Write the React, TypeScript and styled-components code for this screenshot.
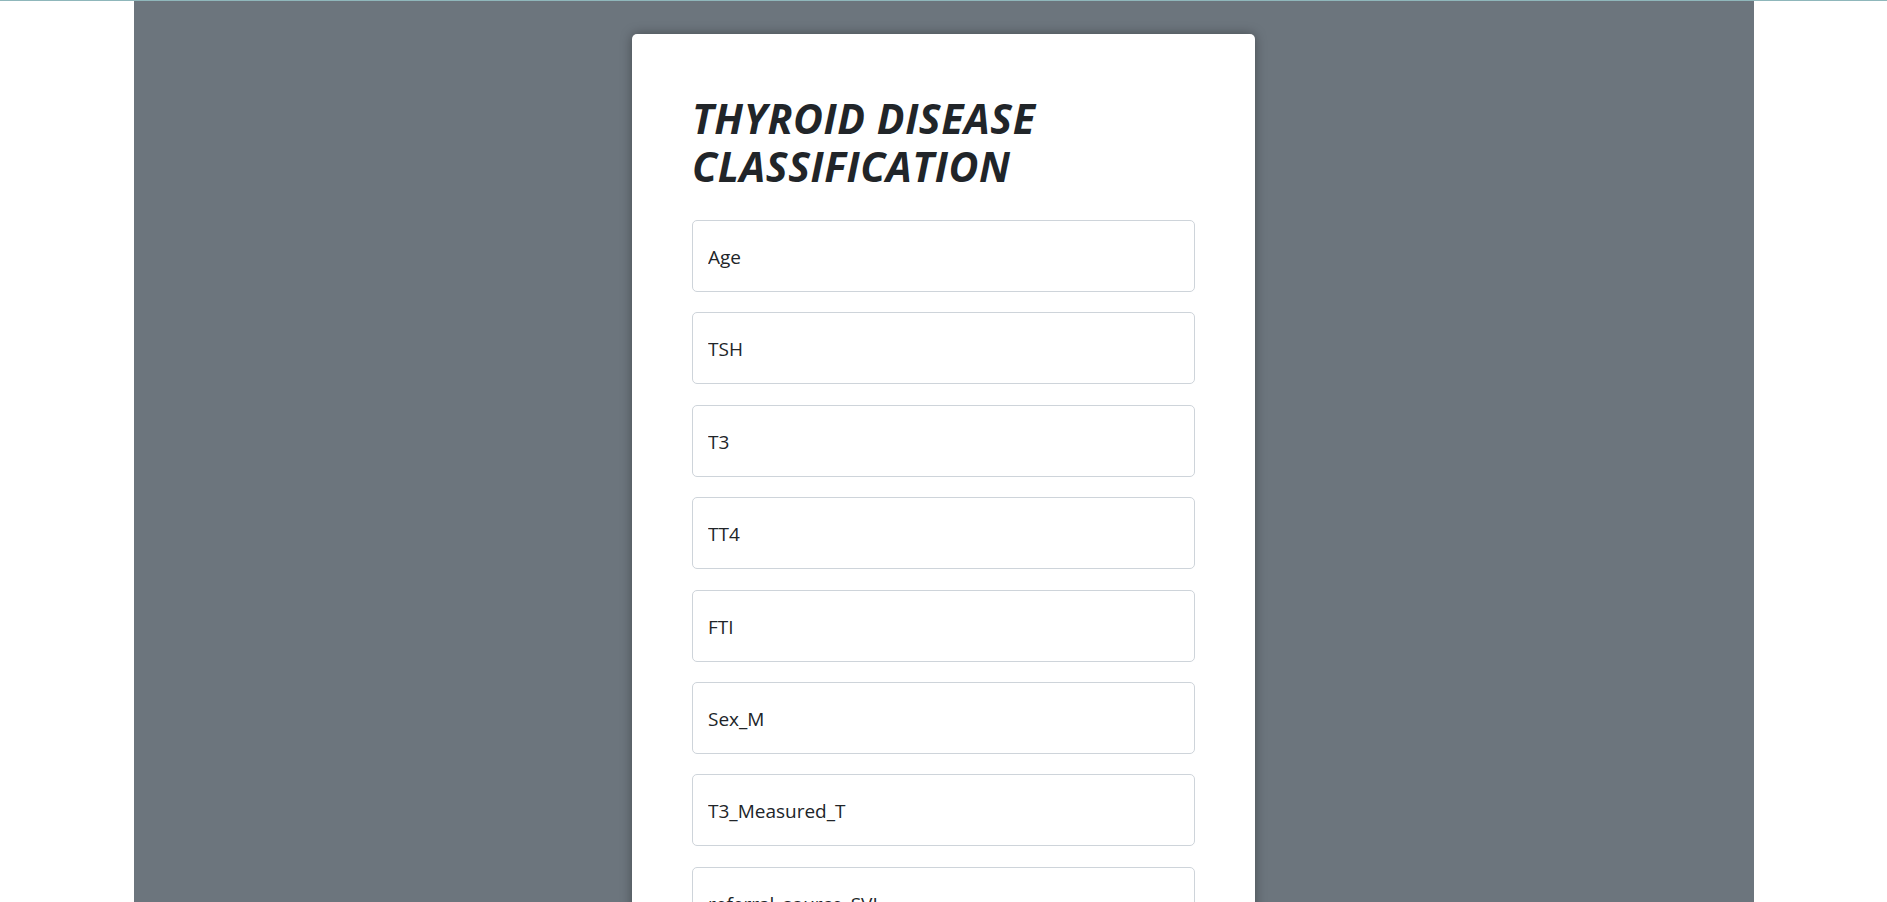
import React from 'react';
import styled, { createGlobalStyle } from 'styled-components';

const GlobalStyle = createGlobalStyle`
  html, body {
    margin: 0;
    padding: 0;
    background: #ffffff;
  }
  body {
    border-top: 1px solid #8fb7bb;
    font-family: 'Open Sans', 'Noto Sans', sans-serif;
    color: #212529;
  }
`;

const Page = styled.div`
  width: 1620px;
  margin: 0 auto;
  min-height: 901px;
  background-color: #6c757d;
  padding-top: 33px;
  padding-bottom: 40px;
  box-sizing: border-box;
`;

const Card = styled.form`
  width: 623px;
  margin: 0 auto;
  padding: 60px;
  box-sizing: border-box;
  background-color: #ffffff;
  border-radius: 5px;
  box-shadow: 0 0 12px rgba(0, 0, 0, 0.35);
`;

const Title = styled.h1`
  margin: 0 0 30px;
  font-size: 41px;
  line-height: 48px;
  font-weight: 700;
  font-style: italic;
  letter-spacing: 0.6px;
  color: #212529;
`;

const Fields = styled.div`
  display: flex;
  flex-direction: column;
  gap: 20.4px;
`;

const Input = styled.input`
  display: block;
  width: 100%;
  height: 72px;
  box-sizing: border-box;
  padding: 2px 15px 0;
  border: 1px solid #ced4da;
  border-radius: 5px;
  background: #ffffff;
  font-family: 'Open Sans', 'Noto Sans', sans-serif;
  font-size: 19px;
  color: #212529;
  outline: none;

  &::placeholder {
    color: #212529;
    opacity: 1;
  }
`;

const SubmitButton = styled.button`
  margin-top: 10px;
  height: 48px;
  border: none;
  border-radius: 5px;
  background-color: #212529;
  color: #ffffff;
  font-family: 'Open Sans', 'Noto Sans', sans-serif;
  font-size: 18px;
`;

const fields = [
  'Age',
  'TSH',
  'T3',
  'TT4',
  'FTI',
  'Sex_M',
  'T3_Measured_T',
  'referral_source_SVI',
  'referral_source_other'
];

export default function App() {
  return (
    <>
      <GlobalStyle />
      <Page>
        <Card onSubmit={e => e.preventDefault()}>
          <Title>
            THYROID DISEASE
            <br />
            CLASSIFICATION
          </Title>
          <Fields>
            {fields.map(name => (
              <Input key={name} type="text" name={name} placeholder={name} />
            ))}
            <SubmitButton type="submit">Predict</SubmitButton>
          </Fields>
        </Card>
      </Page>
    </>
  );
}
